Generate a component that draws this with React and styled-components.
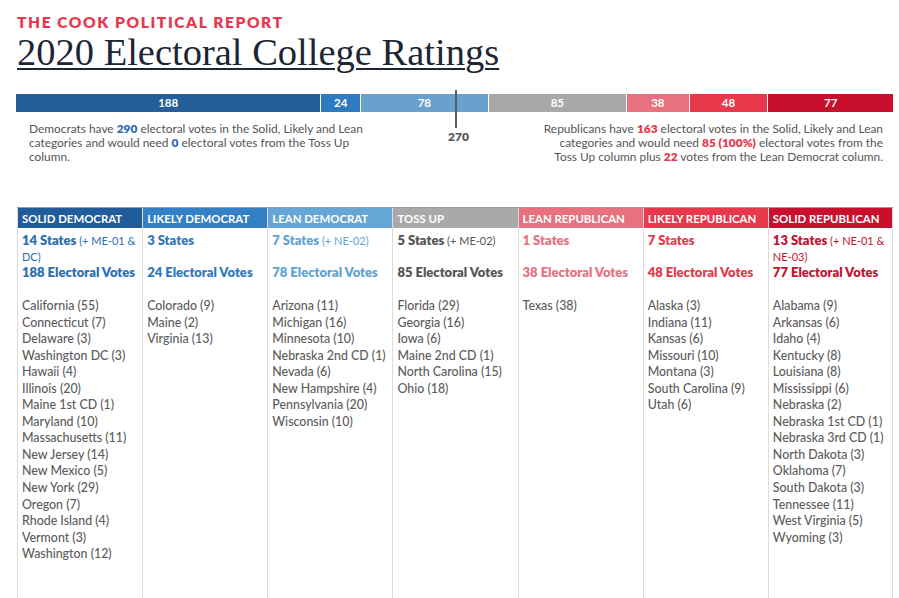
import React from "react";
import styled, { createGlobalStyle } from "styled-components";

const Global = createGlobalStyle`
  html, body { margin: 0; padding: 0; background: #fff; }
  body { font-family: Lato, "Open Sans", Arial, sans-serif; }
`;

const Page = styled.div`
  padding: 13px 6px 0 16px;
  width: 877px;
`;

const Kicker = styled.div`
  color: #e63950;
  font-family: Lato, Arial, sans-serif;
  font-weight: 800;
  font-size: 15.5px;
  letter-spacing: 1.6px;
  line-height: 18px;
  padding-left: 1px;
`;

const Title = styled.h1`
  margin: 0;
  padding-left: 1px;
  width: fit-content;
  font-family: "Liberation Serif", "Times New Roman", serif;
  font-weight: 400;
  font-size: 38.5px;
  line-height: 42px;
  color: #1d2633;
  text-decoration: underline;
  text-decoration-thickness: 2px;
  text-underline-offset: 3px;
`;

const BarWrap = styled.div`
  position: relative;
  margin-top: 21px;
`;

const Bar = styled.div`
  display: flex;
  height: 18px;
`;

const Seg = styled.div`
  flex: ${(p) => p.$v} 0 0;
  background: ${(p) => p.$c};
  color: #fff;
  font-weight: 700;
  font-size: 11.5px;
  line-height: 18px;
  text-align: center;
  border-right: 1px solid #fff;
  &:last-child { border-right: none; }
`;

const Marker = styled.div`
  position: absolute;
  left: 439px;
  top: -4px;
  width: 2px;
  height: 38px;
  background: #555e6a;
`;

const MarkerLabel = styled.div`
  position: absolute;
  left: 432px;
  top: 36px;
  font-size: 12px;
  line-height: 14px;
  font-weight: 800;
  color: #555;
`;

const Notes = styled.div`
  display: flex;
  justify-content: space-between;
  margin-top: 10px;
`;

const Note = styled.p`
  margin: 0;
  width: ${(p) => p.$w}px;
  font-size: 11.9px;
  line-height: 14px;
  color: #555;
  text-align: ${(p) => p.$align};
  padding: ${(p) => (p.$align === "right" ? "0 10px 0 0" : "0 0 0 13px")};
`;

const Em = styled.b`
  color: ${(p) => p.$c};
  font-weight: 800;
`;

const Table = styled.div`
  margin-top: 43px;
  margin-left: 1px;
  display: grid;
  grid-template-columns: repeat(7, 1fr);
  border-top: 1px solid #999;
`;

const Col = styled.div`
  border-left: 1px solid #dcdcdc;
  min-height: 420px;
  &:last-child { border-right: 1px solid #dcdcdc; }
`;

const Head = styled.div`
  background: ${(p) => p.$c};
  color: #fff;
  font-weight: 700;
  font-size: 11.4px;
  height: 20px;
  line-height: 21px;
  padding-left: 4px;
  white-space: nowrap;
  overflow: hidden;
`;

const Body = styled.div`
  padding: 4px 4px 0 4px;
  color: ${(p) => p.$c};
`;

const StatesLine = styled.div`
  font-weight: 800;
  font-size: 13px;
  line-height: 16px;
  height: 32px;
`;

const Small = styled.span`
  font-weight: 400;
  font-size: 11px;
  line-height: 12px;
`;

const Votes = styled.div`
  font-weight: 800;
  font-size: 13px;
  line-height: 16px;
`;

const List = styled.ul`
  list-style: none;
  margin: 18px 0 0;
  padding: 0;
  color: #5c5c5c;
  font-size: 12.4px;
  line-height: 16.55px;
  font-weight: 500;
`;

const cols = [
  {
    name: "Solid Democrat", head: "#1f5c99", text: "#2a6eb3",
    states: "14 States", extra: "(+ ME-01 & DC)", votes: "188 Electoral Votes",
    list: ["California (55)", "Connecticut (7)", "Delaware (3)", "Washington DC (3)", "Hawaii (4)", "Illinois (20)", "Maine 1st CD (1)", "Maryland (10)", "Massachusetts (11)", "New Jersey (14)", "New Mexico (5)", "New York (29)", "Oregon (7)", "Rhode Island (4)", "Vermont (3)", "Washington (12)"],
  },
  {
    name: "Likely Democrat", head: "#3380c4", text: "#2f79c0",
    states: "3 States", votes: "24 Electoral Votes",
    list: ["Colorado (9)", "Maine (2)", "Virginia (13)"],
  },
  {
    name: "Lean Democrat", head: "#66a6d6", text: "#5fa3d6",
    states: "7 States", extra: "(+ NE-02)", votes: "78 Electoral Votes",
    list: ["Arizona (11)", "Michigan (16)", "Minnesota (10)", "Nebraska 2nd CD (1)", "Nevada (6)", "New Hampshire (4)", "Pennsylvania (20)", "Wisconsin (10)"],
  },
  {
    name: "Toss Up", head: "#a9a9a9", text: "#555",
    states: "5 States", extra: "(+ ME-02)", votes: "85 Electoral Votes",
    list: ["Florida (29)", "Georgia (16)", "Iowa (6)", "Maine 2nd CD (1)", "North Carolina (15)", "Ohio (18)"],
  },
  {
    name: "Lean Republican", head: "#e8717f", text: "#e8717f",
    states: "1 States", votes: "38 Electoral Votes",
    list: ["Texas (38)"],
  },
  {
    name: "Likely Republican", head: "#e8384c", text: "#e8384c",
    states: "7 States", votes: "48 Electoral Votes",
    list: ["Alaska (3)", "Indiana (11)", "Kansas (6)", "Missouri (10)", "Montana (3)", "South Carolina (9)", "Utah (6)"],
  },
  {
    name: "Solid Republican", head: "#c8102e", text: "#c8102e",
    states: "13 States", extra: "(+ NE-01 & NE-03)", votes: "77 Electoral Votes",
    list: ["Alabama (9)", "Arkansas (6)", "Idaho (4)", "Kentucky (8)", "Louisiana (8)", "Mississippi (6)", "Nebraska (2)", "Nebraska 1st CD (1)", "Nebraska 3rd CD (1)", "North Dakota (3)", "Oklahoma (7)", "South Dakota (3)", "Tennessee (11)", "West Virginia (5)", "Wyoming (3)"],
  },
];

const segs = [
  { v: 188, c: "#255f99" },
  { v: 24, c: "#2f7bc1" },
  { v: 78, c: "#6aa1cc" },
  { v: 85, c: "#a8a8a8" },
  { v: 38, c: "#e8717f" },
  { v: 48, c: "#e8384c" },
  { v: 77, c: "#c8102e" },
];

export default function App() {
  return (
    <>
      <Global />
      <Page>
        <Kicker>THE COOK POLITICAL REPORT</Kicker>
        <Title>2020 Electoral College Ratings</Title>
        <BarWrap>
          <Bar>
            {segs.map((s, i) => (
              <Seg key={i} $v={s.v} $c={s.c}>{s.v}</Seg>
            ))}
          </Bar>
          <Marker />
          <MarkerLabel>270</MarkerLabel>
          <Notes>
            <Note $w={353} $align="left">
              Democrats have <Em $c="#2a6eb3">290</Em> electoral votes in the Solid, Likely and Lean categories and would need <Em $c="#2a6eb3">0</Em> electoral votes from the Toss Up column.
            </Note>
            <Note $w={341} $align="right">
              Republicans have <Em $c="#e8384c">163</Em> electoral votes in the Solid, Likely and Lean categories and would need <Em $c="#e8384c">85 (100%)</Em> electoral votes from the Toss Up column plus <Em $c="#e8384c">22</Em> votes from the Lean Democrat column.
            </Note>
          </Notes>
        </BarWrap>
        <Table>
          {cols.map((c) => (
            <Col key={c.name}>
              <Head $c={c.head}>{c.name.toUpperCase()}</Head>
              <Body $c={c.text}>
                <StatesLine>
                  {c.states}
                  {c.extra && <Small> {c.extra}</Small>}
                </StatesLine>
                <Votes>{c.votes}</Votes>
                <List>
                  {c.list.map((s) => (
                    <li key={s}>{s}</li>
                  ))}
                </List>
              </Body>
            </Col>
          ))}
        </Table>
      </Page>
    </>
  );
}
